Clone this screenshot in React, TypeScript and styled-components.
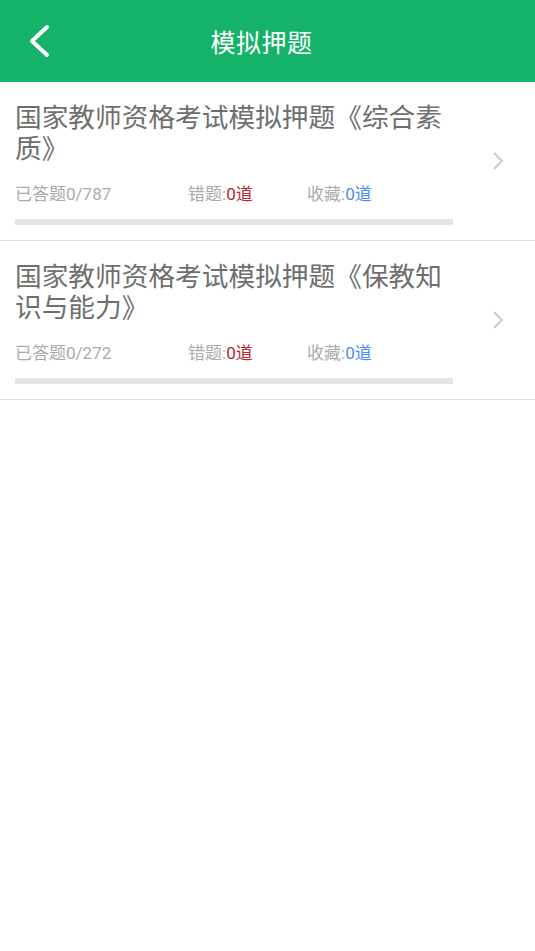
import React from "react";
import styled, { createGlobalStyle } from "styled-components";

interface Paper {
    id: number;
    title: string;
    answered: number;
    total: number;
    wrong: number;
    starred: number;
}

const papers: Paper[] = [
    { id: 1, title: "国家教师资格考试模拟押题《综合素质》", answered: 0, total: 787, wrong: 0, starred: 0 },
    { id: 2, title: "国家教师资格考试模拟押题《保教知识与能力》", answered: 0, total: 272, wrong: 0, starred: 0 }
];

const BackIcon = () => (
    <svg width="24" height="36" viewBox="0 0 24 36">
        <path d="M20 4 L5 18 L20 32" fill="none" stroke="#fff" strokeWidth="4" strokeLinecap="round" strokeLinejoin="round" />
    </svg>
);

const ChevronIcon = () => (
    <svg width="12" height="20" viewBox="0 0 12 20">
        <path d="M2 2 L10 10 L2 18" fill="none" stroke="#cccccc" strokeWidth="2" />
    </svg>
);

const PaperRow = ({ paper }: { paper: Paper }) => {
    const progress = paper.total ? (paper.answered / paper.total) * 100 : 0;
    return (
        <Row>
            <Content>
                <Title>{paper.title}</Title>
                <Stats>
                    <span>
                        已答题{paper.answered}/{paper.total}
                    </span>
                    <span>
                        错题:<Count $tone="red">{paper.wrong}道</Count>
                    </span>
                    <span>
                        收藏:<Count $tone="blue">{paper.starred}道</Count>
                    </span>
                </Stats>
                <Track>
                    <Fill style={{ width: `${progress}%` }} />
                </Track>
            </Content>
            <Arrow>
                <ChevronIcon />
            </Arrow>
        </Row>
    );
};

const App = () => {
    return (
        <>
            <GlobalStyle />
            <Page>
                <Header>
                    <BackButton aria-label="返回">
                        <BackIcon />
                    </BackButton>
                    <HeaderTitle>模拟押题</HeaderTitle>
                </Header>
                <List>
                    {papers.map((p) => (
                        <PaperRow key={p.id} paper={p} />
                    ))}
                </List>
            </Page>
        </>
    );
};

export default App;

const GlobalStyle = createGlobalStyle`
    html, body {
        margin: 0;
        padding: 0;
        background: #ffffff;
    }
    body {
        font-family: Roboto, "Noto Sans CJK SC", sans-serif;
    }
`;

const Page = styled.div`
    width: 535px;
    min-height: 951px;
    background: #ffffff;
`;

const Header = styled.header`
    position: relative;
    height: 82px;
    padding-right: 12px;
    background: #15b26a;
    display: flex;
    align-items: center;
    justify-content: center;
`;

const BackButton = styled.button`
    position: absolute;
    left: 27px;
    top: 23px;
    padding: 0;
    border: none;
    background: none;
    display: flex;
`;

const HeaderTitle = styled.h1`
    margin: 0;
    color: #ffffff;
    font-size: 25px;
    font-weight: 400;
    font-family: "Noto Sans CJK SC", sans-serif;
    letter-spacing: 0.5px;
`;

const List = styled.div`
    display: flex;
    flex-direction: column;
`;

const Row = styled.div`
    display: flex;
    align-items: center;
    padding: 18px 0 15px 15px;
    border-bottom: 1px solid #dddddd;
`;

const Content = styled.div`
    width: 438px;
    display: flex;
    flex-direction: column;
`;

const Title = styled.div`
    color: #6e6e6e;
    font-size: 26.7px;
    line-height: 31px;
    font-family: "Noto Sans CJK SC", sans-serif;
`;

const Stats = styled.div`
    display: grid;
    grid-template-columns: 173px 119px auto;
    margin-top: 20px;
    color: #ababab;
    font-size: 17px;
    line-height: 24px;
    font-family: Roboto, "Noto Sans CJK SC", sans-serif;
`;

const Count = styled.span<{ $tone: "red" | "blue" }>`
    color: ${(props) => (props.$tone === "red" ? "#b3272d" : "#4a8ef0")};
`;

const Track = styled.div`
    margin-top: 13px;
    height: 6px;
    background: #e5e5e5;
`;

const Fill = styled.div`
    height: 100%;
    background: #15b26a;
`;

const Arrow = styled.div`
    flex: 1;
    display: flex;
    justify-content: center;
    padding: 0 0 4px 8px;
`;
